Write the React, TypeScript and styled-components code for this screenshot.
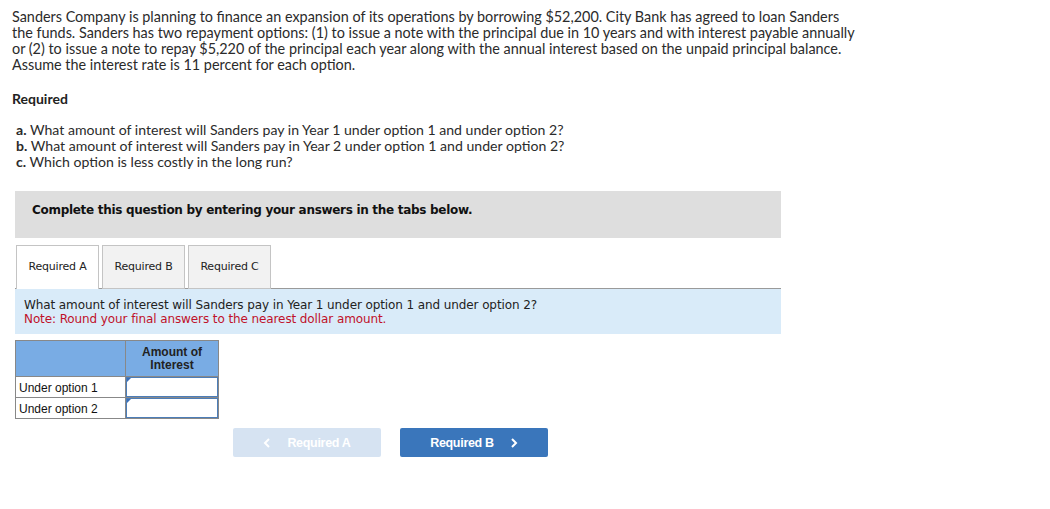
import styled, { createGlobalStyle } from "styled-components";

const Global = createGlobalStyle`
  body {
    margin: 0;
    background: #fff;
    font-family: "Lato", "Open Sans", sans-serif;
    color: #222;
  }
`;

const Page = styled.div`
  padding: 9px 12px 0 12px;
  width: 870px;
`;

const Intro = styled.p`
  margin: 0;
  font-size: 14.4px;
  line-height: 16px;
  color: #2b2b2b;
  white-space: nowrap;
`;

const Heading = styled.h4`
  margin: 18px 0 0 0;
  font-size: 14px;
  line-height: 16px;
  font-weight: 700;
`;

const Questions = styled.ol`
  list-style: none;
  margin: 15px 0 0 0;
  padding: 0 0 0 4px;
  font-size: 14.1px;
  line-height: 16px;
  color: #2b2b2b;
`;

const Question = styled.li`
  margin: 0;
`;

const Letter = styled.b`
  font-weight: 700;
`;

const Banner = styled.div`
  margin: 21px 0 0 3px;
  width: 766px;
  height: 47px;
  background: #dedede;
  padding: 12px 0 0 17px;
  box-sizing: border-box;
  font-family: "DejaVu Sans", Verdana, sans-serif;
  font-size: 12px;
  line-height: 15px;
  font-weight: 700;
  color: #111;
  letter-spacing: -0.3px;
`;

const Tabs = styled.div`
  display: flex;
  gap: 3px;
  margin: 7px 0 0 4px;
  position: relative;
  z-index: 1;
`;

const Tab = styled.div<{ $active?: boolean }>`
  width: 83px;
  height: 44px;
  box-sizing: border-box;
  border: 1px solid #c4c4c4;
  border-bottom: ${(p) => (p.$active ? "none" : "1px solid #c4c4c4")};
  background: ${(p) => (p.$active ? "#fff" : "#f2f2f2")};
  display: flex;
  align-items: center;
  justify-content: center;
  padding-bottom: 2px;
  font-family: "DejaVu Sans", Verdana, sans-serif;
  font-size: 11px;
  color: #222;
  letter-spacing: -0.2px;
`;

const Panel = styled.div`
  margin: -1px 0 0 3px;
  width: 766px;
  height: 46px;
  box-sizing: border-box;
  border-top: 1px solid #9a9a9a;
  background: #d9ebf9;
  padding: 9px 9px 0 9px;
  font-family: "DejaVu Sans", Verdana, sans-serif;
  font-size: 12px;
  line-height: 14px;
  color: #222;
  letter-spacing: -0.1px;
`;

const Note = styled.div`
  color: #c0112a;
`;

const Grid = styled.table`
  margin: 6px 0 0 3px;
  border-collapse: collapse;
  font-family: "Liberation Sans", Arial, sans-serif;
  font-size: 12px;
`;

const HeadCell = styled.th<{ $w: number }>`
  width: ${(p) => p.$w}px;
  height: 36px;
  background: #79ace4;
  border: 1px solid #888;
  font-weight: 700;
  color: #222;
  line-height: 13px;
  vertical-align: top;
  padding: 5px 0 0 0;
  box-sizing: border-box;
`;

const LabelCell = styled.td`
  border: 1px solid #888;
  height: 20px;
  padding: 1px 0 0 3px;
  color: #111;
  background: #fff;
  box-sizing: border-box;
`;

const InputCell = styled.td`
  border: 1px solid #888;
  padding: 0;
  height: 20px;
`;

const AnswerBox = styled.div`
  position: relative;
  height: 18px;
  border: 1px solid #4c7db8;
  background: #fff;
  &::before {
    content: "";
    position: absolute;
    left: 0;
    top: 0;
    border-left: 4px solid #3a6fb8;
    border-bottom: 4px solid transparent;
  }
`;

const Nav = styled.div`
  display: flex;
  gap: 19px;
  margin: 9px 0 0 221px;
`;

const NavButton = styled.div<{ $disabled?: boolean }>`
  width: 148px;
  height: 29px;
  border-radius: 2px;
  background: ${(p) => (p.$disabled ? "#d6e3f2" : "#3a76bb")};
  color: #fff;
  display: flex;
  align-items: center;
  justify-content: center;
  gap: 16px;
  box-sizing: border-box;
  font-family: "Liberation Sans", Arial, sans-serif;
  font-size: 12.5px;
  font-weight: 700;
  letter-spacing: -0.3px;
`;

const Chevron = ({ dir }: { dir: "left" | "right" }) => (
  <svg width="8" height="10" viewBox="0 0 8 10">
    <path
      d={dir === "left" ? "M6 1 L2 5 L6 9" : "M2 1 L6 5 L2 9"}
      fill="none"
      stroke="#fff"
      strokeWidth="2"
    />
  </svg>
);

const App = () => {
  return (
    <Page>
      <Global />
      <Intro>
        Sanders Company is planning to finance an expansion of its operations by
        borrowing $52,200. City Bank has agreed to loan Sanders
        <br />
        the funds. Sanders has two repayment options: (1) to issue a note with
        the principal due in 10 years and with interest payable annually
        <br />
        or (2) to issue a note to repay $5,220 of the principal each year along
        with the annual interest based on the unpaid principal balance.
        <br />
        Assume the interest rate is 11 percent for each option.
      </Intro>

      <Heading>Required</Heading>

      <Questions>
        <Question>
          <Letter>a.</Letter> What amount of interest will Sanders pay in Year 1
          under option 1 and under option 2?
        </Question>
        <Question>
          <Letter>b.</Letter> What amount of interest will Sanders pay in Year 2
          under option 1 and under option 2?
        </Question>
        <Question>
          <Letter>c.</Letter> Which option is less costly in the long run?
        </Question>
      </Questions>

      <Banner>Complete this question by entering your answers in the tabs below.</Banner>

      <Tabs>
        <Tab $active>Required A</Tab>
        <Tab>Required B</Tab>
        <Tab>Required C</Tab>
      </Tabs>

      <Panel>
        What amount of interest will Sanders pay in Year 1 under option 1 and
        under option 2?
        <Note>Note: Round your final answers to the nearest dollar amount.</Note>
      </Panel>

      <Grid>
        <thead>
          <tr>
            <HeadCell $w={110} />
            <HeadCell $w={93}>
              Amount of
              <br />
              Interest
            </HeadCell>
          </tr>
        </thead>
        <tbody>
          <tr>
            <LabelCell>Under option 1</LabelCell>
            <InputCell>
              <AnswerBox />
            </InputCell>
          </tr>
          <tr>
            <LabelCell>Under option 2</LabelCell>
            <InputCell>
              <AnswerBox />
            </InputCell>
          </tr>
        </tbody>
      </Grid>

      <Nav>
        <NavButton $disabled>
          <Chevron dir="left" />
          Required A
        </NavButton>
        <NavButton>
          Required B
          <Chevron dir="right" />
        </NavButton>
      </Nav>
    </Page>
  );
};

export default App;
